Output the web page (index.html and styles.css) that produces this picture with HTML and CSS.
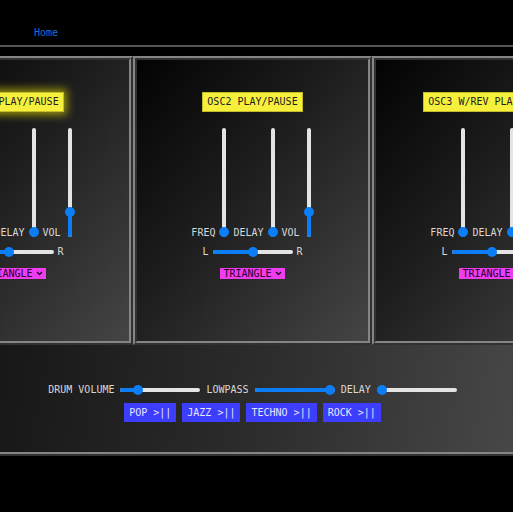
FILE: index.html
```html
<!DOCTYPE html>
<html lang="en">
<head>
<meta charset="utf-8">
<title>Synth</title>
<link rel="stylesheet" href="styles.css">
</head>
<body>
<header class="topbar">
  <nav class="nav"><a class="nav-link" href="#">Home</a></nav>
</header>
<main class="stage">
  <section class="rack">
    <article class="osc">
      <button class="play is-playing">OSC1 PLAY/PAUSE</button>
      <div class="faders">
        <span class="lbl">FREQ</span>
        <div class="vslider" style="--v:0"><span class="fill"></span><span class="thumb"></span></div>
        <span class="lbl">DELAY</span>
        <div class="vslider" style="--v:0"><span class="fill"></span><span class="thumb"></span></div>
        <span class="lbl">VOL</span>
        <div class="vslider" style="--v:0.2"><span class="fill"></span><span class="thumb"></span></div>
      </div>
      <div class="pan">
        <span class="lbl">L</span>
        <div class="hslider" style="--v:0.44"><span class="fill"></span><span class="thumb"></span></div>
        <span class="lbl">R</span>
      </div>
      <div class="wave">TRIANGLE<svg class="chev" width="7" height="5" viewBox="0 0 7 5"><polyline points="1,1 3.5,3.5 6,1" fill="none" stroke="#2a002a" stroke-width="1.4"/></svg></div>
    </article>
    <article class="osc">
      <button class="play">OSC2 PLAY/PAUSE</button>
      <div class="faders">
        <span class="lbl">FREQ</span>
        <div class="vslider" style="--v:0"><span class="fill"></span><span class="thumb"></span></div>
        <span class="lbl">DELAY</span>
        <div class="vslider" style="--v:0"><span class="fill"></span><span class="thumb"></span></div>
        <span class="lbl">VOL</span>
        <div class="vslider" style="--v:0.2"><span class="fill"></span><span class="thumb"></span></div>
      </div>
      <div class="pan">
        <span class="lbl">L</span>
        <div class="hslider" style="--v:0.5"><span class="fill"></span><span class="thumb"></span></div>
        <span class="lbl">R</span>
      </div>
      <div class="wave">TRIANGLE<svg class="chev" width="7" height="5" viewBox="0 0 7 5"><polyline points="1,1 3.5,3.5 6,1" fill="none" stroke="#2a002a" stroke-width="1.4"/></svg></div>
    </article>
    <article class="osc">
      <button class="play">OSC3 W/REV PLAY/PAUSE</button>
      <div class="faders">
        <span class="lbl">FREQ</span>
        <div class="vslider" style="--v:0"><span class="fill"></span><span class="thumb"></span></div>
        <span class="lbl">DELAY</span>
        <div class="vslider" style="--v:0"><span class="fill"></span><span class="thumb"></span></div>
        <span class="lbl">VOL</span>
        <div class="vslider" style="--v:0.2"><span class="fill"></span><span class="thumb"></span></div>
      </div>
      <div class="pan">
        <span class="lbl">L</span>
        <div class="hslider" style="--v:0.5"><span class="fill"></span><span class="thumb"></span></div>
        <span class="lbl">R</span>
      </div>
      <div class="wave">TRIANGLE<svg class="chev" width="7" height="5" viewBox="0 0 7 5"><polyline points="1,1 3.5,3.5 6,1" fill="none" stroke="#2a002a" stroke-width="1.4"/></svg></div>
    </article>
  </section>
</main>
<section class="drums">
  <div class="drums-inner">
    <div class="drum-row">
      <span class="lbl">DRUM VOLUME</span>
      <div class="hslider" style="--v:0.18"><span class="fill"></span><span class="thumb"></span></div>
      <span class="lbl">LOWPASS</span>
      <div class="hslider" style="--v:1"><span class="fill"></span><span class="thumb"></span></div>
      <span class="lbl">DELAY</span>
      <div class="hslider" style="--v:0"><span class="fill"></span><span class="thumb"></span></div>
    </div>
    <div class="drum-buttons">
      <button class="beat">POP &gt;||</button>
      <button class="beat">JAZZ &gt;||</button>
      <button class="beat">TECHNO &gt;||</button>
      <button class="beat">ROCK &gt;||</button>
    </div>
  </div>
</section>
</body>
</html>
```
FILE: styles.css
```css
html, body {
  margin: 0;
  padding: 0;
  background: #000;
  overflow: hidden;
}
body {
  font-family: "DejaVu Sans Mono", "Liberation Mono", monospace;
  font-size: 10px;
  color: #d8d8d8;
}
.topbar {
  height: 47px;
  box-sizing: border-box;
  border-bottom: 2px solid #555;
}
.nav {
  padding: 27px 0 0 34px;
  line-height: 12px;
}
.nav-link {
  color: #1670d4;
  text-decoration: none;
}
.stage {
  width: 505px;
  margin-top: 9px;
}
.rack {
  display: flex;
  justify-content: center;
}
.osc {
  flex: 0 0 239px;
  height: 289px;
  box-sizing: border-box;
  border: 4px ridge #858585;
  background: linear-gradient(to bottom right, #030303 0%, #1e1e1e 45%, #454545 100%);
  display: flex;
  flex-direction: column;
  align-items: center;
  padding-top: 32px;
}
.play {
  height: 20px;
  padding: 0 4px;
  border: 1px solid #c2bb2a;
  background: #f6ef3c;
  color: #222;
  font: 10px/18px "DejaVu Sans Mono", monospace;
  white-space: nowrap;
}
.play.is-playing {
  box-shadow: 0 0 9px 3px rgba(255, 244, 0, 0.55);
}
.lbl {
  line-height: 10px;
  white-space: nowrap;
}
.faders {
  margin-top: 16px;
  display: flex;
  align-items: flex-end;
  gap: 4px;
}
.vslider {
  position: relative;
  flex: none;
  width: 10px;
  height: 110px;
}
.vslider::before {
  content: "";
  position: absolute;
  left: 3px;
  width: 4px;
  top: 0;
  bottom: 1px;
  background: #e4e4e4;
  border-radius: 2px;
}
.vslider .fill {
  position: absolute;
  left: 3px;
  width: 4px;
  bottom: 1px;
  height: calc(var(--v) * 99px + 5px);
  background: #0b7df5;
  border-radius: 2px;
}
.vslider .thumb {
  position: absolute;
  left: 0;
  width: 10px;
  height: 10px;
  border-radius: 50%;
  background: #0b7df5;
  bottom: calc(var(--v) * 99px + 1px);
}
.hslider {
  position: relative;
  flex: none;
  width: 80px;
  height: 10px;
}
.hslider::before {
  content: "";
  position: absolute;
  top: 3px;
  height: 4px;
  left: 0;
  right: 0;
  background: #e4e4e4;
  border-radius: 2px;
}
.hslider .fill {
  position: absolute;
  top: 3px;
  height: 4px;
  left: 0;
  width: calc(var(--v) * 70px + 5px);
  background: #0b7df5;
  border-radius: 2px;
}
.hslider .thumb {
  position: absolute;
  top: 0;
  width: 10px;
  height: 10px;
  border-radius: 50%;
  background: #0b7df5;
  left: calc(var(--v) * 70px);
}
.pan {
  margin-top: 8px;
  height: 12px;
  display: flex;
  align-items: center;
  gap: 4px;
}
.wave {
  margin-top: 10px;
  display: flex;
  align-items: center;
  gap: 3px;
  height: 11px;
  line-height: 11px;
  padding: 0 3px;
  background: #ee3cee;
  color: #2a002a;
}
.chev {
  display: block;
}
.drums {
  height: 111px;
  box-sizing: border-box;
  border-bottom: 4px ridge #858585;
  background: linear-gradient(100deg, #171717 0%, #2c2c2c 50%, #474747 100%);
}
.drums-inner {
  width: 505px;
  padding-top: 40px;
  display: flex;
  flex-direction: column;
  align-items: center;
}
.drum-row {
  display: flex;
  align-items: center;
  gap: 6px;
  height: 10px;
}
.drum-buttons {
  margin-top: 8px;
  display: flex;
  gap: 6px;
}
.beat {
  height: 19px;
  padding: 0 5px;
  border: none;
  background: #3d3dfc;
  color: #e6e6ff;
  font: 10px/19px "DejaVu Sans Mono", monospace;
  white-space: nowrap;
}
```
